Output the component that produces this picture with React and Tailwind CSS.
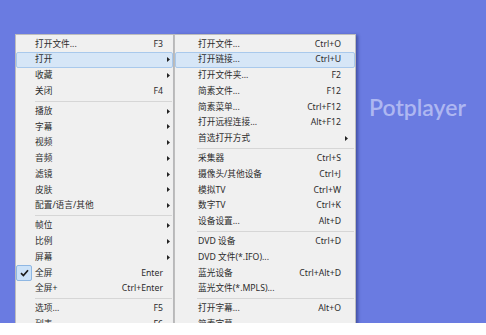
import React from "react";

const FONT = { fontFamily: '"Noto Sans", "Noto Sans CJK SC", sans-serif' };

const leftItems = [
  { l: "打开文件...", s: "F3" },
  { l: "打开", a: true, h: true },
  { l: "收藏", a: true },
  { l: "关闭", s: "F4" },
  "sep",
  { l: "播放", a: true },
  { l: "字幕", a: true },
  { l: "视频", a: true },
  { l: "音频", a: true },
  { l: "滤镜", a: true },
  { l: "皮肤", a: true },
  { l: "配置/语言/其他", a: true },
  "sep",
  { l: "帧位", a: true },
  { l: "比例", a: true },
  { l: "屏幕", a: true },
  { l: "全屏", s: "Enter", c: true },
  { l: "全屏+", s: "Ctrl+Enter" },
  "sep",
  { l: "选项...", s: "F5" },
  { l: "列表", s: "F6" },
];

const rightItems = [
  { l: "打开文件...", s: "Ctrl+O" },
  { l: "打开链接...", s: "Ctrl+U", h: true },
  { l: "打开文件夹...", s: "F2" },
  { l: "简素文件...", s: "F12" },
  { l: "简素菜单...", s: "Ctrl+F12" },
  { l: "打开远程连接...", s: "Alt+F12" },
  { l: "首选打开方式", a: true },
  "sep",
  { l: "采集器", s: "Ctrl+S" },
  { l: "摄像头/其他设备", s: "Ctrl+J" },
  { l: "模拟TV", s: "Ctrl+W" },
  { l: "数字TV", s: "Ctrl+K" },
  { l: "设备设置...", s: "Alt+D" },
  "sep",
  { l: "DVD 设备", s: "Ctrl+D" },
  { l: "DVD 文件(*.IFO)..." },
  { l: "蓝光设备", s: "Ctrl+Alt+D" },
  { l: "蓝光文件(*.MPLS)..." },
  "sep",
  { l: "打开字幕...", s: "Alt+O" },
  { l: "简素字幕..." },
];

function Arrow() {
  return (
    <svg width="3" height="5" viewBox="0 0 3 5">
      <path d="M0 0L3 2.5L0 5Z" fill="#222" />
    </svg>
  );
}

function Check() {
  return (
    <div className="w-[16px] h-[16px] shrink-0 rounded-[2px] border border-[#8fb7e3] bg-[#cce2f8] flex items-center justify-center">
      <svg width="9" height="8" viewBox="0 0 9 8">
        <path d="M1 4.2L3.4 6.6L8 1.2" fill="none" stroke="#1c1c1c" strokeWidth="1.7" />
      </svg>
    </div>
  );
}

function Menu({ items, width, gutter, right, arrowPad, sepLeft, extra }) {
  return (
    <div
      className={`${width} shrink-0 border border-[#bdbdbd] bg-[#f0f0f0] pt-px text-[#2c2c2c] text-[8.7px] ${extra}`}
      style={FONT}
    >
      {items.map((it, i) =>
        it === "sep" ? (
          <div key={i} className="h-[4.25px] flex items-center">
            <div className={`${sepLeft} mr-px flex-1 h-px bg-[#d6d6d6]`} />
          </div>
        ) : (
          <div
            key={i}
            className={`h-[15.75px] flex items-center rounded-[2px] border ${
              it.h ? "bg-[#d6e6f7] border-[#a9c9ec]" : "border-transparent"
            }`}
          >
            <div className={`${gutter} shrink-0 flex items-center`}>{it.c ? <Check /> : null}</div>
            <div className="flex-1 whitespace-nowrap leading-none">{it.l}</div>
            <div className="whitespace-nowrap leading-none">{it.s || ""}</div>
            <div className={`${right} shrink-0 flex items-center ${arrowPad}`}>{it.a ? <Arrow /> : null}</div>
          </div>
        )
      )}
    </div>
  );
}

export default function App() {
  return (
    <div className="w-[486px] h-[335px] bg-white">
      <div className="h-[323px] bg-[#6a7be1] overflow-hidden flex items-start pl-[15px] pt-[34px]">
        <Menu
          items={leftItems}
          width="w-[159px]"
          gutter="w-[19px] -ml-px"
          right="w-[9px]"
          arrowPad="pl-[4px]"
          sepLeft="ml-[19px]"
          extra=""
        />
        <Menu
          items={rightItems}
          width="w-[182px]"
          gutter="w-[22px]"
          right="w-[13px]"
          arrowPad="pl-[4px]"
          sepLeft="ml-[22px]"
          extra="shadow-[2px_1px_3px_rgba(20,30,90,0.45)]"
        />
        <div
          className="ml-[13px] mt-[62px] text-[23px] leading-none font-semibold text-[#aeb7f1]"
          style={{ fontFamily: "Lato, sans-serif" }}
        >
          Potplayer
        </div>
      </div>
    </div>
  );
}
